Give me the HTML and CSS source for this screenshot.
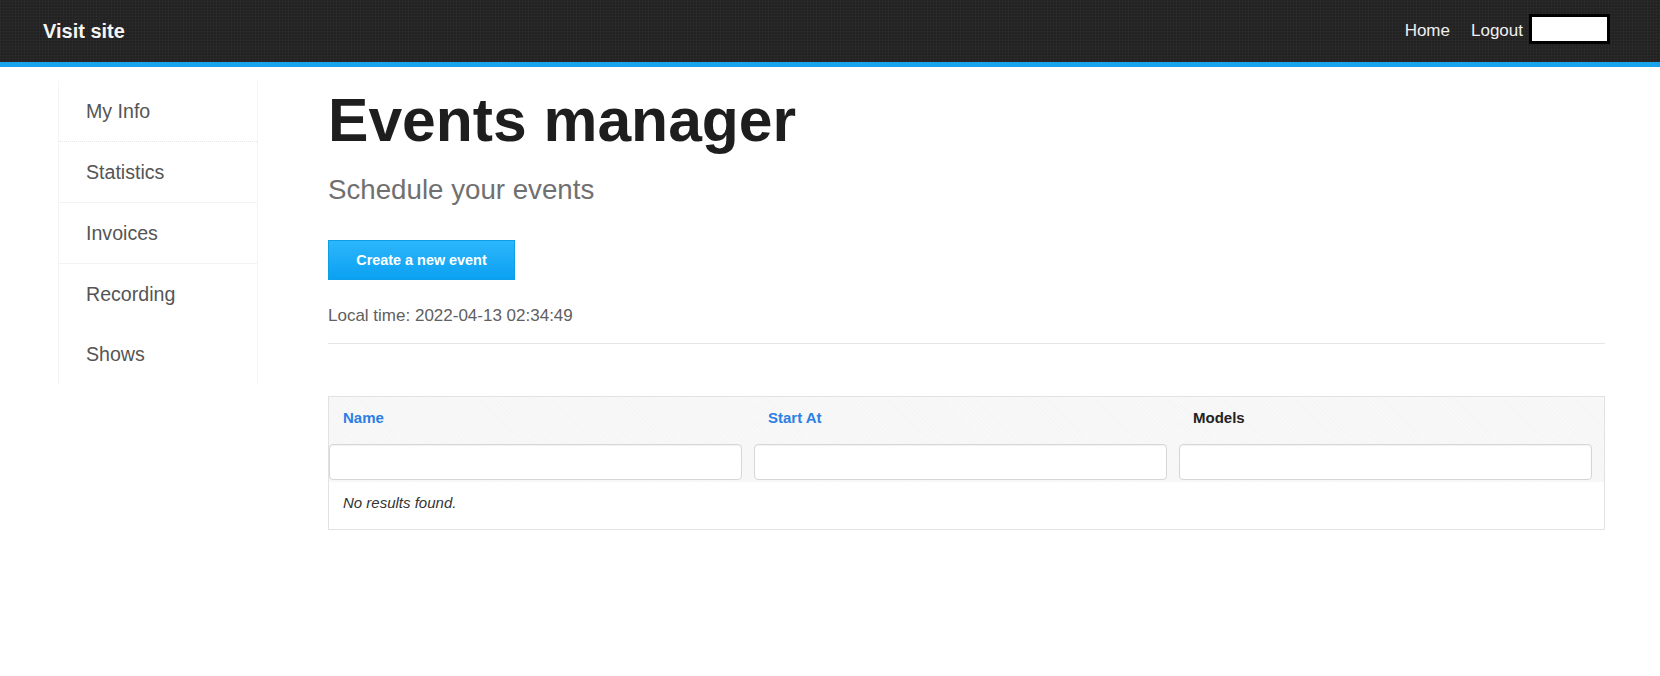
FILE: index.html
```html
<!DOCTYPE html>
<html lang="en">
<head>
<meta charset="utf-8">
<title>Events manager</title>
<link rel="stylesheet" href="styles.css">
</head>
<body>
<header class="topbar">
  <a class="brand" href="#">Visit site</a>
  <nav class="topnav">
    <a href="#">Home</a>
    <a href="#">Logout</a>
    <span class="userbox"></span>
  </nav>
</header>
<div class="layout">
  <aside class="sidebar">
    <a class="side-item dotted" href="#">My Info</a>
    <a class="side-item" href="#">Statistics</a>
    <a class="side-item" href="#">Invoices</a>
    <a class="side-item plain" href="#">Recording</a>
    <a class="side-item plain" href="#">Shows</a>
  </aside>
  <main class="main">
    <h1 class="title">Events manager</h1>
    <p class="subtitle">Schedule your events</p>
    <a class="btn" href="#">Create a new event</a>
    <p class="localtime">Local time: 2022-04-13 02:34:49</p>
    <hr class="rule">
    <div class="grid-box">
      <table class="grid">
        <thead>
          <tr class="head-row">
            <th><a href="#">Name</a></th>
            <th><a href="#">Start At</a></th>
            <th class="plain-th">Models</th>
          </tr>
          <tr class="filter-row">
            <td><input type="text"></td>
            <td><input type="text"></td>
            <td><input type="text"></td>
          </tr>
        </thead>
        <tbody>
          <tr><td colspan="3" class="empty">No results found.</td></tr>
        </tbody>
      </table>
    </div>
  </main>
</div>
</body>
</html>
```

FILE: styles.css
```css
* { box-sizing: border-box; }
body {
  margin: 0;
  font-family: "Liberation Sans", Arial, sans-serif;
  background: #fff;
  color: #333;
}
a { text-decoration: none; }

.topbar {
  height: 67px;
  background-color: #222;
  background-image: repeating-linear-gradient(0deg, rgba(255,255,255,0.025) 0 1px, transparent 1px 3px),
                    repeating-linear-gradient(90deg, rgba(255,255,255,0.025) 0 1px, transparent 1px 3px);
  border-bottom: 5px solid #17a4ec;
  display: flex;
  align-items: center;
  justify-content: space-between;
  padding: 0 50px 0 43px;
}
.brand {
  color: #f4f4f4;
  font-weight: bold;
  font-size: 20px;
}
.topnav {
  display: flex;
  align-items: center;
  margin-bottom: 5px;
}
.topnav a {
  color: #f0f0f0;
  font-size: 17px;
  margin-right: 21px;
  margin-top: 4px;
}
.topnav a:nth-child(2) { margin-right: 6px; }
.userbox {
  width: 81px;
  height: 30px;
  background: #fff;
  border: 3px solid #000;
}

.layout {
  display: flex;
  align-items: flex-start;
  padding: 14px 55px 0 58px;
}
.sidebar {
  width: 200px;
  flex: none;
  margin-right: 70px;
  border-left: 1px solid #f4f4f4;
  border-right: 1px solid #f4f4f4;
  display: flex;
  flex-direction: column;
}
.side-item {
  display: flex;
  align-items: center;
  height: 61px;
  padding-left: 27px;
  font-size: 19.6px;
  color: #555;
  border-bottom: 1px solid #f3f3f3;
}
.side-item.dotted { border-bottom: 1px dotted #e6e6e6; }
.side-item.plain { border-bottom-color: transparent; }
.side-item:last-child { height: 60px; }

.main {
  flex: 1;
  min-width: 0;
}
.title {
  margin: 5px 0 0;
  font-size: 60.6px;
  line-height: 68px;
  font-weight: bold;
  color: #1e1e1e;
}
.subtitle {
  margin: 20px 0 0;
  font-size: 27.7px;
  line-height: 32px;
  color: #707070;
}
.btn {
  display: flex;
  align-items: center;
  justify-content: center;
  width: 187px;
  height: 40px;
  margin-top: 34px;
  background: linear-gradient(#2db6fb, #0ba1f2);
  border: 1px solid #0e9fe6;
  color: #fff;
  font-weight: bold;
  font-size: 14.4px;
}
.localtime {
  margin: 26px 0 0;
  font-size: 17px;
  line-height: 20px;
  color: #606060;
}
.rule {
  margin: 17px 0 0;
  border: 0;
  border-top: 1px solid #e6e6e6;
  height: 0;
}

.grid-box {
  margin-top: 52px;
  border: 1px solid #e2e2e2;
}
.grid {
  width: 100%;
  border-collapse: collapse;
  table-layout: fixed;
}
.head-row th, .filter-row td {
  background-color: #f8f8f8;
  background-image: repeating-linear-gradient(45deg, rgba(0,0,0,0.012) 0 1px, transparent 1px 3px);
}
.head-row th {
  text-align: left;
  padding: 12px 14px 10px;
  font-size: 15px;
  line-height: 18px;
  font-weight: bold;
}
.head-row th a { color: #2d7fe3; }
.head-row th.plain-th { color: #222; }
.filter-row td {
  padding: 7px 12px 2px 0;
}
.filter-row input {
  display: block;
  width: 100%;
  height: 36px;
  border: 1px solid #d6d6d6;
  border-radius: 4px;
  background: #fff;
  box-shadow: inset 0 1px 1px rgba(0,0,0,0.05);
  font: inherit;
}
.empty {
  padding: 12px 14px 17px;
  font-size: 15px;
  line-height: 18px;
  font-style: italic;
  color: #333;
}
```
